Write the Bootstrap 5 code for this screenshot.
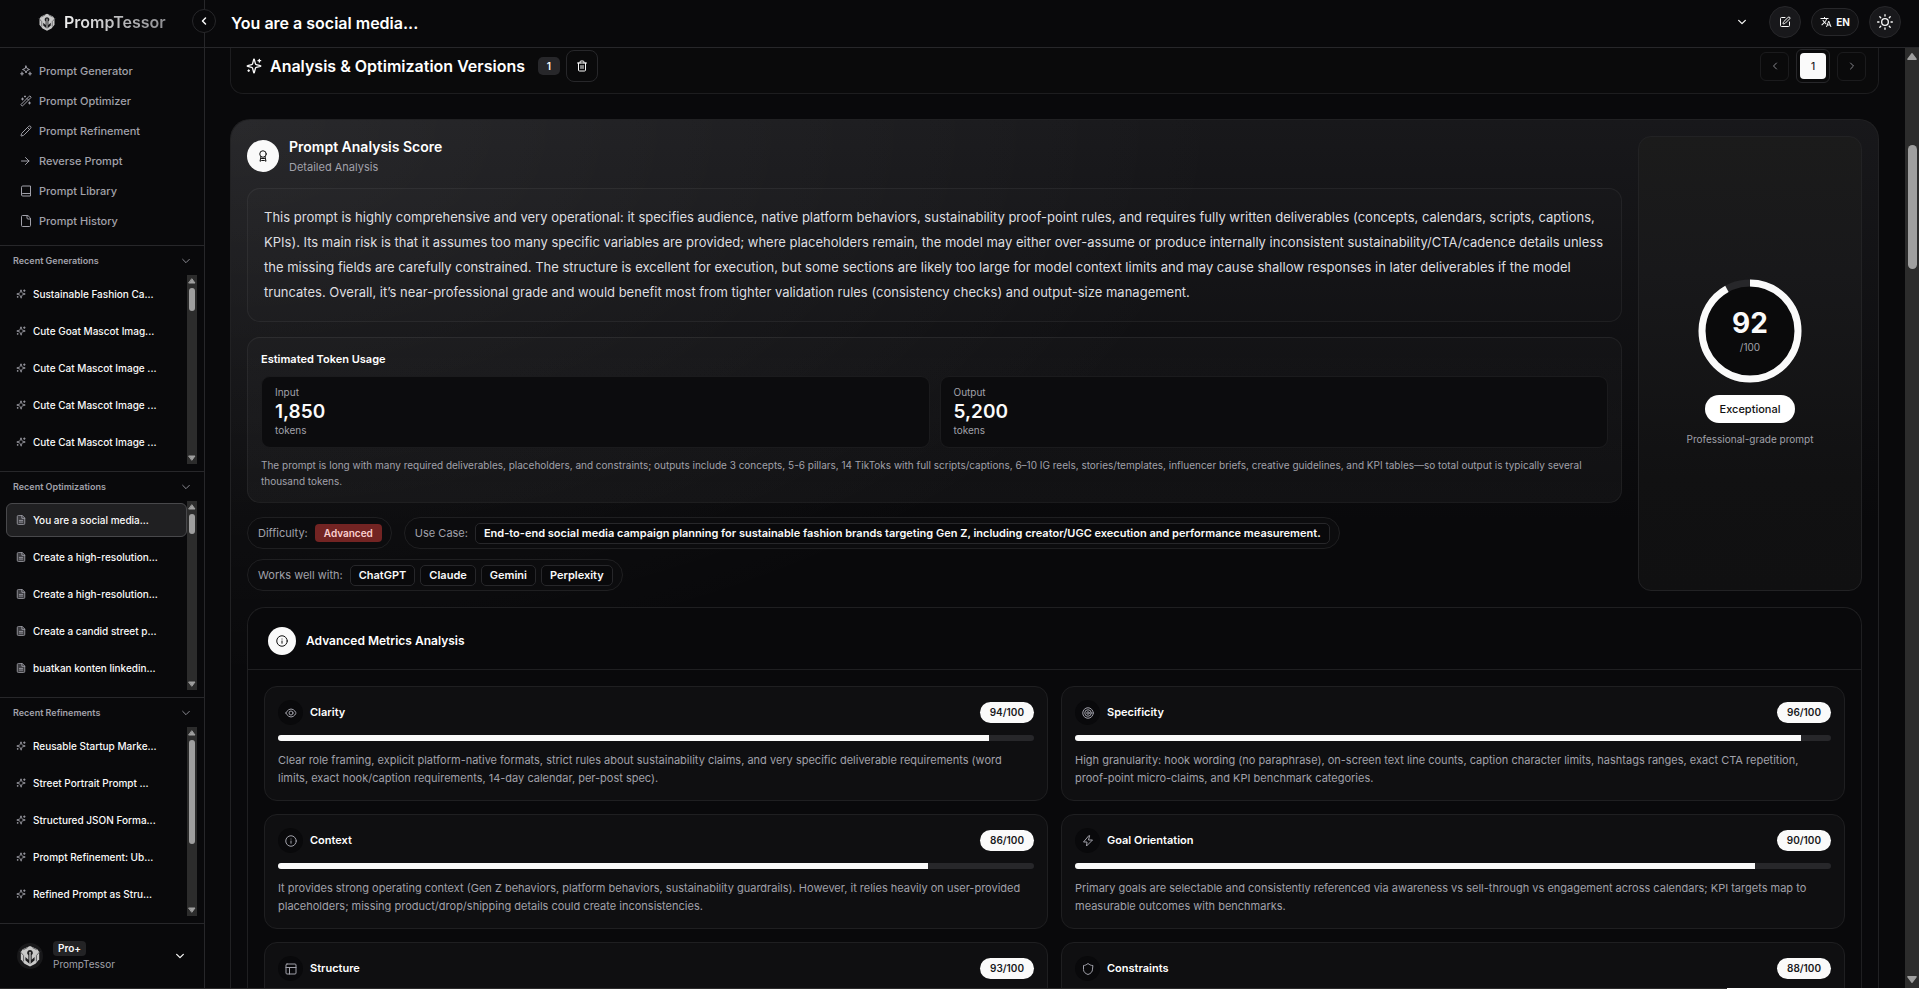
<!DOCTYPE html>
<html lang="en" data-bs-theme="dark">
<head>
<meta charset="utf-8">
<meta name="viewport" content="width=device-width, initial-scale=1">
<title>PrompTessor</title>
<link href="https://cdn.jsdelivr.net/npm/bootstrap@5.3.0/dist/css/bootstrap.min.css" rel="stylesheet">
<style>
  :root { --bg: #09090b; --line: #27272a; --soft: #1d1d1f; --muted: #a1a1aa; --ink: #fafafa; }
  body { background: var(--bg); color: var(--ink); font-family: Inter, "Liberation Sans", sans-serif; font-size: 11px; line-height: 18px; height: 100vh; overflow: hidden; }
  a { color: inherit; text-decoration: none; }
  h1, h2, h3, p { margin: 0; }
  button { color: inherit; padding: 0; background: none; border: 0; }
  svg { display: block; flex: none; fill: none; stroke: currentColor; stroke-width: 2; stroke-linecap: round; stroke-linejoin: round; }
  .i10 { width: 10px; height: 10px; } .i12 { width: 12px; height: 12px; } .i16 { width: 16px; height: 16px; }
  .bold-icon { stroke-width: 3; }
  .muted { color: var(--muted); }
  .t10 { font-size: 10px; } .semi { font-weight: 600; }
  .gap-10 { gap: 10px; }
  .fill-min { min-width: 0; min-height: 0; }
  .round { border-radius: 50%; display: flex; align-items: center; justify-content: center; flex: none; }

  .side { width: 205px; border-right: 1px solid var(--line); flex: none; }
  .topbar { height: 48px; border-bottom: 1px solid var(--line); flex: none; }
  .brand { padding-left: 38px; gap: 8px; font-size: 16px; font-weight: 600; padding-bottom: 3px; }
  .brand-name { background: linear-gradient(90deg, #f2f2f2, #8e8e92); -webkit-background-clip: text; background-clip: text; color: transparent; }
  .collapse-btn { position: absolute; left: 192px; top: 9px; width: 24px; height: 24px; background: var(--bg); border: 1px solid var(--line); z-index: 2; }
  .side-nav { padding: 8px 20px 9px; flex: none; color: var(--muted); font-weight: 500; }
  .side-nav a { gap: 7px; height: 30px; }
  .recent { border-top: 1px solid var(--line); flex: 1 1 0; min-height: 0; padding-bottom: 7px; }
  .recent-head { height: 29px; padding: 0 13px; font-size: 9px; font-weight: 600; color: var(--muted); flex: none; width: 100%; }
  .recent-list { padding: 2px 0 3px 6px; gap: 3px; min-width: 0; }
  .recent-list a { height: 34px; padding: 0 8px 0 9px; gap: 7px; font-size: 10px; font-weight: 500; border: 1px solid transparent; border-radius: 6px; }
  .recent-list a.active { background: #202022; border-color: #48484b; }
  .recent-list svg { color: var(--muted); }
  .rail { width: 10px; margin-right: 7px; background: #2c2c2c; flex: none; padding: 2px 0; color: #9f9f9f; }
  .rail svg, .page-rail svg { fill: currentColor; stroke: none; }
  .thumb { width: 6px; border-radius: 3px; background: #9f9f9f; margin-top: 3px; }
  .user { border-top: 1px solid var(--line); height: 65px; padding: 0 19px 0 17px; flex: none; }
  .avatar { width: 26px; height: 26px; background: #18181a; }
  .plan { background: #232325; border-radius: 4px; padding: 0 5px; }
  .user-name { line-height: 16px; }

  .head-main { padding: 0 18px 3px 26px; font-size: 16px; font-weight: 600; gap: 10px; }
  .head-main h1 { font-size: 16px; line-height: 20px; padding-top: 2px; }
  .circle-btn { width: 32px; height: 32px; background: #18181b; border: 1px solid var(--line); }
  .lang-btn { width: 48px; height: 28px; background: #111113; border: 1px solid var(--line); border-radius: 14px; gap: 4px; font-size: 10px; font-weight: 700; }

  .page { padding: 0 26px 0 25px; min-width: 0; overflow: hidden; }
  .page-rail { width: 14px; background: #2c2c2c; color: #9f9f9f; padding: 3px 0; flex: none; }
  .page-thumb { width: 9px; height: 124px; border-radius: 5px; background: #9f9f9f; margin-top: 83px; }
  .versions { height: 46px; border: 1px solid var(--soft); border-top: 0; border-radius: 0 0 13px 13px; padding: 0 12px 9px 15px; background: #0a0a0b; flex: none; }
  .versions h2 { font-size: 16px; line-height: 24px; font-weight: 600; }
  .count { background: #27272a; border-radius: 5px; width: 22px; line-height: 18px; text-align: center; font-size: 10px; font-weight: 600; margin: 0 6px 0 13px; }
  .pager { gap: 7px; }
  .sq { border: 1px solid var(--line); border-radius: 6px; display: flex; align-items: center; justify-content: center; }
  .sq-32 { width: 32px; height: 32px; border-radius: 8px; }
  .sq-29 { width: 29px; height: 29px; border-color: #1b1b1d; color: #85858b; }
  .sq-34 { width: 34px; height: 34px; padding: 3px; }
  .pg { width: 26px; height: 26px; border-radius: 4px; background: var(--ink); color: #18181b; font-size: 10px; line-height: 24px; font-weight: 500; }

  .analysis { margin-top: 25px; border: 1px solid #212123; border-bottom: 0; border-radius: 20px 20px 0 0; padding: 16px;
    background: radial-gradient(ellipse 1000px 560px at 0 0, rgba(255,255,255,.075), rgba(255,255,255,.035) 50%, transparent), linear-gradient(180deg, #18181b, #09090b 400px); flex: none; }
  .disc-32 { width: 32px; height: 32px; } .disc-28 { width: 28px; height: 28px; }
  .disc { background: var(--ink); color: #111; }
  .ttl { font-size: 14px; line-height: 22px; font-weight: 600; }
  .box { border: 1px solid rgba(255,255,255,.055); border-radius: 13px; background: rgba(255,255,255,.012); }
  .summary { padding: 16px; font-size: 13px; line-height: 25px; color: #dedee0; margin-top: 12px; }
  .tokens { margin-top: 15px; padding: 13px; background: linear-gradient(180deg, rgba(255,255,255,.02), rgba(255,255,255,.035)); }
  .tokens h3 { font-size: 11px; line-height: 16px; font-weight: 600; margin-bottom: 9px; }
  .tok { border: 1px solid #1b1b1d; border-radius: 9px; background: #0c0c0e; padding: 9px 13px 10px; font-size: 10px; line-height: 13px; flex: 1 1 0; }
  .tok strong { display: block; font-size: 19px; line-height: 25px; font-weight: 600; color: var(--ink); }
  .note { margin-top: 9px; font-size: 10px; line-height: 16px; }
  .pills { margin-top: 14px; gap: 10px 12px; }
  .pill { height: 32px; border: 1px solid #1f1f21; border-radius: 16px; background: #0c0c0e; padding: 0 9px 0 10px; gap: 5px; }
  .pill > .muted { margin-right: 2px; }
  .tag { height: 21px; line-height: 19px; border: 1px solid var(--line); border-radius: 5px; padding: 0 8px; background: var(--bg); font-weight: 600; }
  .level { height: 18px; line-height: 18px; border-radius: 4px; padding: 0 9px; background: #732423; color: #fbd0d0; font-size: 10px; font-weight: 600; }
  .score { width: 224px; flex: none; padding-bottom: 3px; background: linear-gradient(180deg, #1b1b1b, #18181a 30%, #111112 75%, #101011); border-color: #222224; }
  .ring { position: relative; width: 104px; height: 104px; }
  .ring svg { width: 104px; height: 104px; stroke-linecap: butt; }
  .ring-num { position: absolute; inset: 0; gap: 2px; }
  .ring-num b { font-size: 28px; line-height: 30px; }
  .ring-num span { line-height: 14px; }
  .grade { background: #fff; color: #111; border-radius: 14px; line-height: 28px; padding: 0 15px; margin: 12px 0 10px; font-weight: 500; }
  .verdict { line-height: 13px; }

  .metrics { margin-top: 16px; border: 1px solid #1f1f21; border-bottom: 0; border-radius: 18px 18px 0 0; background: var(--bg); }
  .metrics-head { height: 62px; padding: 5px 20px 0; gap: 10px; border-bottom: 1px solid #1f1f21; }
  .metrics-head h2 { font-size: 12px; line-height: 18px; font-weight: 600; }
  .metric-grid { display: grid; grid-template-columns: 1fr 1fr; gap: 13px; padding: 16px; }
  .metric { border: 1px solid #1f1f21; border-radius: 13px; background: #0f0f11; padding: 13px; }
  .metric h3 { font-size: 11px; line-height: 25px; font-weight: 600; }
  .metric-top { gap: 7px; }
  .disc-25 { width: 25px; height: 25px; background: var(--bg); color: var(--muted); }
  .out { background: var(--ink); color: #18181b; border-radius: 11px; line-height: 21px; padding: 0 10px; font-size: 10px; font-weight: 600; }
  .metric .progress { height: 6px; border-radius: 3px; background: #27272a; margin: 10px 0; }
  .metric .progress-bar { background: var(--ink); }
  .frame-line { height: 1px; flex: none; background: linear-gradient(90deg, #2b2a2b 90%, #fff 90%); }
</style>
</head>
<body class="d-flex flex-column">
<svg class="d-none" aria-hidden="true">
  <symbol id="logo" viewBox="0 0 24 24"><path d="M12 1l8 3.500 2 3v8l-4 5-6 3-6-3-4-5v-8l2-3z" fill="#c9c9c9" stroke="none"/><path d="M1.500 7.500l3.500 4v6M22.500 7.500l-3.500 4v6M5 5l4-2M19 5l-4-2" stroke="#5a5a5c" stroke-width="1"/><path d="M12 5.500a3.200 3.200 0 0 0-1.800 5.800V16L7 13v3.500l5 4.500 5-4.500V13l-3.200 3v-4.700A3.200 3.200 0 0 0 12 5.500z" fill="#1d1d1f" stroke="none"/><path d="M12 8v13" stroke="#c9c9c9" stroke-width="1.400"/></symbol>
  <symbol id="gen" viewBox="0 0 24 24"><path d="M12 2l2 5 5 2-5 2-2 5-2-5-5-2 5-2z"/><path d="M4 14l1 2.500 2.500 1L5 18.500 4 21l-1-2.500-2.500-1L3 16.500zM20 14l1 2.500 2.500 1-2.500 1L20 21l-1-2.500-2.500-1 2.500-1z" fill="currentColor" stroke-width="1"/></symbol>
  <symbol id="wand" viewBox="0 0 24 24"><path d="m21.640 3.640-1.280-1.280a1.210 1.210 0 0 0-1.720 0L2.360 18.640a1.210 1.210 0 0 0 0 1.720l1.280 1.280a1.200 1.200 0 0 0 1.720 0L21.640 5.360a1.200 1.200 0 0 0 0-1.720M14 7l3 3M5 6v4M19 14v4M10 2v2M7 8H3M21 16h-4M11 3H9"/></symbol>
  <symbol id="pencil" viewBox="0 0 24 24"><path d="M21.200 6.800a1 1 0 0 0-4-4L3.800 16.200a2 2 0 0 0-.5.800l-1.300 4.400a.5.500 0 0 0 .6.600l4.400-1.300a2 2 0 0 0 .8-.5zM15 5l4 4"/></symbol>
  <symbol id="arrow" viewBox="0 0 24 24"><path d="M3 12h15M11 5l7 7-7 7"/></symbol>
  <symbol id="book" viewBox="0 0 24 24"><path d="M3 19.500v-15A2.500 2.500 0 0 1 5.500 2H21v20H5.500a2.500 2.500 0 0 1 0-5H21"/></symbol>
  <symbol id="file" viewBox="0 0 24 24"><path d="M15 1H5a2 2 0 0 0-2 2v18a2 2 0 0 0 2 2h14a2 2 0 0 0 2-2V7zM14 1v5a2 2 0 0 0 2 2h5"/></symbol>
  <symbol id="doc" viewBox="0 0 24 24"><path d="M14 1H6a3 3 0 0 0-3 3v16a3 3 0 0 0 3 3h12a3 3 0 0 0 3-3V8z" fill="#3c3c40"/><path d="M14 1v7h7M8 13h8M8 17h8"/></symbol>
  <symbol id="sparkles" viewBox="0 0 24 24"><path d="M9.900 15.500A2 2 0 0 0 8.500 14.100l-6.100-1.600a.5.500 0 0 1 0-1L8.500 9.900A2 2 0 0 0 9.900 8.500l1.600-6.100a.5.500 0 0 1 1 0L14.100 8.500A2 2 0 0 0 15.500 9.900l6.100 1.600a.5.500 0 0 1 0 1L15.500 14.100a2 2 0 0 0-1.400 1.400l-1.600 6.100a.5.500 0 0 1-1 0z"/><path d="M20 2v4M22 4h-4M4 18v2M5 19H3"/></symbol>
  <symbol id="down" viewBox="0 0 24 24"><path d="m4 8 8 8 8-8"/></symbol>
  <symbol id="left" viewBox="0 0 24 24"><path d="m15 18-6-6 6-6"/></symbol>
  <symbol id="right" viewBox="0 0 24 24"><path d="m9 18 6-6-6-6"/></symbol>
  <symbol id="tri-up" viewBox="0 0 10 8"><path d="M5 2 8 6H2z" stroke="currentColor" stroke-width="1"/></symbol>
  <symbol id="tri-down" viewBox="0 0 10 8"><path d="M5 6 8 2H2z" stroke="currentColor" stroke-width="1"/></symbol>
  <symbol id="edit" viewBox="0 0 24 24"><path d="M12 3H5a2 2 0 0 0-2 2v14a2 2 0 0 0 2 2h14a2 2 0 0 0 2-2v-7M18.400 2.600a1 1 0 0 1 3 3l-9 9a2 2 0 0 1-.9.500l-2.900.8a.5.500 0 0 1-.6-.6l.8-2.900a2 2 0 0 1 .5-.9z"/></symbol>
  <symbol id="translate" viewBox="0 0 24 24"><path d="M12.870 15.070l-2.540-2.510.030-.030A17.500 17.500 0 0 0 14.070 6H17V4h-7V2H8v2H1v2h11.170C11.500 7.920 10.440 9.750 9 11.350 8.070 10.320 7.300 9.190 6.690 8h-2c.73 1.630 1.730 3.170 2.980 4.560l-5.090 5.020L4 19l5-5 3.110 3.110zM18.500 10h-2L12 22h2l1.120-3h4.750L21 22h2zm-2.620 7l1.620-4.330L19.120 17z" fill="currentColor" stroke="none"/></symbol>
  <symbol id="sun" viewBox="0 0 24 24"><circle cx="12" cy="12" r="5"/><path d="M12 1v2M12 21v2M4.200 4.200l1.400 1.400M18.400 18.400l1.400 1.400M1 12h2M21 12h2M4.200 19.800l1.400-1.400M18.400 5.600l1.400-1.400"/></symbol>
  <symbol id="trash" viewBox="0 0 24 24"><path d="M3 6h18M19 6v14a2 2 0 0 1-2 2H7a2 2 0 0 1-2-2V6M8 6V4a2 2 0 0 1 2-2h4a2 2 0 0 1 2 2v2M10 11v6M14 11v6"/></symbol>
  <symbol id="award" viewBox="0 0 24 24"><circle cx="12" cy="8" r="6.500"/><path d="M8 13l-2 9.500 3-1.500h6l3 1.500L16 13M9 17h6"/></symbol>
  <symbol id="info" viewBox="0 0 24 24"><circle cx="12" cy="12" r="10.500"/><path d="M12 16.500V12M12 8v.1"/></symbol>
  <symbol id="eye" viewBox="0 0 24 24"><path d="M2 12s3-8 10-8 10 8 10 8-3 8-10 8S2 12 2 12z"/><circle cx="12" cy="12" r="4"/></symbol>
  <symbol id="target" viewBox="0 0 24 24"><circle cx="12" cy="12" r="10.500"/><circle cx="12" cy="12" r="6.500"/><circle cx="12" cy="12" r="2.500"/></symbol>
  <symbol id="zap" viewBox="0 0 24 24"><path d="M13 2 3 14h7l-1 8L21 10h-8l2-8z"/></symbol>
  <symbol id="layout" viewBox="0 0 24 24"><rect x="2" y="2" width="20" height="20" rx="2"/><path d="M2 9h20M9 22V9"/></symbol>
  <symbol id="shield" viewBox="0 0 24 24"><path d="M21 13c0 5-3.500 8-9 10-5.500-2-9-5-9-10V5c3 0 6-1.500 9-4 3 2.500 6 4 9 4z"/></symbol>
</svg>

<div class="d-flex flex-grow-1 position-relative fill-min">
  <aside class="side d-flex flex-column">
    <div class="topbar brand d-flex align-items-center"><svg width="18" height="18"><use href="#logo"/></svg><span class="brand-name">PrompTessor</span></div>
    <nav class="side-nav d-flex flex-column">
      <a class="d-flex align-items-center" href="#"><svg class="i12"><use href="#gen"/></svg>Prompt Generator</a>
      <a class="d-flex align-items-center" href="#"><svg class="i12"><use href="#wand"/></svg>Prompt Optimizer</a>
      <a class="d-flex align-items-center" href="#"><svg class="i12"><use href="#pencil"/></svg>Prompt Refinement</a>
      <a class="d-flex align-items-center" href="#"><svg class="i12"><use href="#arrow"/></svg>Reverse Prompt</a>
      <a class="d-flex align-items-center" href="#"><svg class="i12"><use href="#book"/></svg>Prompt Library</a>
      <a class="d-flex align-items-center" href="#"><svg class="i12"><use href="#file"/></svg>Prompt History</a>
    </nav>

    <section class="recent d-flex flex-column">
      <button class="recent-head d-flex align-items-center justify-content-between" type="button">Recent Generations<svg class="i10"><use href="#down"/></svg></button>
      <div class="d-flex flex-grow-1 overflow-hidden">
        <div class="recent-list d-flex flex-column flex-grow-1">
          <a class="d-flex align-items-center" href="#"><svg class="i10"><use href="#sparkles"/></svg>Sustainable Fashion Ca...</a>
          <a class="d-flex align-items-center" href="#"><svg class="i10"><use href="#sparkles"/></svg>Cute Goat Mascot Imag...</a>
          <a class="d-flex align-items-center" href="#"><svg class="i10"><use href="#sparkles"/></svg>Cute Cat Mascot Image ...</a>
          <a class="d-flex align-items-center" href="#"><svg class="i10"><use href="#sparkles"/></svg>Cute Cat Mascot Image ...</a>
          <a class="d-flex align-items-center" href="#"><svg class="i10"><use href="#sparkles"/></svg>Cute Cat Mascot Image ...</a>
        </div>
        <div class="rail d-flex flex-column align-items-center"><svg width="10" height="8"><use href="#tri-up"/></svg><div class="thumb" style="height:23px"></div><svg class="mt-auto" width="10" height="8"><use href="#tri-down"/></svg></div>
      </div>
    </section>

    <section class="recent d-flex flex-column">
      <button class="recent-head d-flex align-items-center justify-content-between" type="button">Recent Optimizations<svg class="i10"><use href="#down"/></svg></button>
      <div class="d-flex flex-grow-1 overflow-hidden">
        <div class="recent-list d-flex flex-column flex-grow-1">
          <a class="active d-flex align-items-center" href="#"><svg class="i10"><use href="#doc"/></svg>You are a social media...</a>
          <a class="d-flex align-items-center" href="#"><svg class="i10"><use href="#doc"/></svg>Create a high-resolution...</a>
          <a class="d-flex align-items-center" href="#"><svg class="i10"><use href="#doc"/></svg>Create a high-resolution...</a>
          <a class="d-flex align-items-center" href="#"><svg class="i10"><use href="#doc"/></svg>Create a candid street p...</a>
          <a class="d-flex align-items-center" href="#"><svg class="i10"><use href="#doc"/></svg>buatkan konten linkedin...</a>
        </div>
        <div class="rail d-flex flex-column align-items-center"><svg width="10" height="8"><use href="#tri-up"/></svg><div class="thumb" style="height:20px"></div><svg class="mt-auto" width="10" height="8"><use href="#tri-down"/></svg></div>
      </div>
    </section>

    <section class="recent d-flex flex-column">
      <button class="recent-head d-flex align-items-center justify-content-between" type="button">Recent Refinements<svg class="i10"><use href="#down"/></svg></button>
      <div class="d-flex flex-grow-1 overflow-hidden">
        <div class="recent-list d-flex flex-column flex-grow-1">
          <a class="d-flex align-items-center" href="#"><svg class="i10"><use href="#sparkles"/></svg>Reusable Startup Marke...</a>
          <a class="d-flex align-items-center" href="#"><svg class="i10"><use href="#sparkles"/></svg>Street Portrait Prompt ...</a>
          <a class="d-flex align-items-center" href="#"><svg class="i10"><use href="#sparkles"/></svg>Structured JSON Forma...</a>
          <a class="d-flex align-items-center" href="#"><svg class="i10"><use href="#sparkles"/></svg>Prompt Refinement: Ub...</a>
          <a class="d-flex align-items-center" href="#"><svg class="i10"><use href="#sparkles"/></svg>Refined Prompt as Stru...</a>
        </div>
        <div class="rail d-flex flex-column align-items-center"><svg width="10" height="8"><use href="#tri-up"/></svg><div class="thumb" style="height:104px"></div><svg class="mt-auto" width="10" height="8"><use href="#tri-down"/></svg></div>
      </div>
    </section>

    <button class="user d-flex align-items-center text-start gap-10" type="button">
      <span class="avatar round"><svg width="22" height="22"><use href="#logo"/></svg></span>
      <span class="d-flex flex-column align-items-start t10"><span class="plan semi lh-base">Pro+</span><span class="muted user-name">PrompTessor</span></span>
      <svg class="i10 ms-auto bold-icon"><use href="#down"/></svg>
    </button>
  </aside>
  <button class="collapse-btn round" type="button" aria-label="Collapse sidebar"><svg class="i12 bold-icon"><use href="#left"/></svg></button>

  <div class="d-flex flex-column flex-grow-1 fill-min">
    <header class="topbar head-main d-flex align-items-center">
      <h1 class="fw-semibold me-auto">You are a social media...</h1>
      <button type="button" class="me-2 pe-1" aria-label="More"><svg class="i10 bold-icon"><use href="#down"/></svg></button>
      <button type="button" class="circle-btn round" aria-label="Edit"><svg class="i12"><use href="#edit"/></svg></button>
      <button type="button" class="lang-btn d-flex align-items-center justify-content-center"><svg class="i12"><use href="#translate"/></svg>EN</button>
      <button type="button" class="circle-btn round" aria-label="Theme"><svg class="i16"><use href="#sun"/></svg></button>
    </header>

    <div class="d-flex flex-grow-1 fill-min">
      <main class="page d-flex flex-column flex-grow-1">
        <section class="versions d-flex align-items-center">
          <svg class="i16"><use href="#sparkles"/></svg>
          <h2 class="ms-2">Analysis &amp; Optimization Versions</h2>
          <span class="count">1</span>
          <button type="button" class="sq sq-32" aria-label="Delete"><svg class="i12"><use href="#trash"/></svg></button>
          <div class="pager ms-auto d-flex align-items-center">
            <button type="button" class="sq sq-29" aria-label="Previous"><svg class="i12"><use href="#left"/></svg></button>
            <span class="sq sq-34"><button type="button" class="pg">1</button></span>
            <button type="button" class="sq sq-29" aria-label="Next"><svg class="i12"><use href="#right"/></svg></button>
          </div>
        </section>

        <section class="analysis">
          <div class="d-flex gap-3">
            <div class="flex-grow-1 fill-min">
              <div class="d-flex align-items-center gap-10">
                <span class="disc disc-32 round"><svg class="i12"><use href="#award"/></svg></span>
                <div><h2 class="ttl">Prompt Analysis Score</h2><p class="muted">Detailed Analysis</p></div>
              </div>
              <p class="box summary">This prompt is highly comprehensive and very operational: it specifies audience, native platform behaviors, sustainability proof-point rules, and requires fully written deliverables (concepts, calendars, scripts, captions, KPIs). Its main risk is that it assumes too many specific variables are provided; where placeholders remain, the model may either over-assume or produce internally inconsistent sustainability/CTA/cadence details unless the missing fields are carefully constrained. The structure is excellent for execution, but some sections are likely too large for model context limits and may cause shallow responses in later deliverables if the model truncates. Overall, it’s near-professional grade and would benefit most from tighter validation rules (consistency checks) and output-size management.</p>
              <div class="box tokens">
                <h3>Estimated Token Usage</h3>
                <div class="d-flex gap-10">
                  <div class="tok muted">Input<strong>1,850</strong>tokens</div>
                  <div class="tok muted">Output<strong>5,200</strong>tokens</div>
                </div>
                <p class="note muted">The prompt is long with many required deliverables, placeholders, and constraints; outputs include 3 concepts, 5-6 pillars, 14 TikToks with full scripts/captions, 6–10 IG reels, stories/templates, influencer briefs, creative guidelines, and KPI tables—so total output is typically several thousand tokens.</p>
              </div>
              <div class="pills d-flex flex-wrap">
                <div class="pill d-flex align-items-center"><span class="muted">Difficulty:</span><span class="level">Advanced</span></div>
                <div class="pill d-flex align-items-center"><span class="muted">Use Case:</span><span class="tag">End-to-end social media campaign planning for sustainable fashion brands targeting Gen Z, including creator/UGC execution and performance measurement.</span></div>
                <div class="w-100 d-flex"><div class="pill d-flex align-items-center"><span class="muted">Works well with:</span><span class="tag">ChatGPT</span><span class="tag">Claude</span><span class="tag">Gemini</span><span class="tag">Perplexity</span></div></div>
              </div>
            </div>
            <div class="box score d-flex flex-column align-items-center justify-content-center">
              <div class="ring">
                <svg viewBox="0 0 104 104"><circle cx="52" cy="52" r="48" fill="#0a0a0b" stroke="#27272a" stroke-width="7"/><circle cx="52" cy="52" r="48" stroke="#fafafa" stroke-width="7" pathLength="100" stroke-dasharray="92 8" transform="rotate(-90 52 52)"/></svg>
                <div class="ring-num d-flex flex-column align-items-center justify-content-center"><b>92</b><span class="muted t10">/100</span></div>
              </div>
              <span class="grade">Exceptional</span>
              <span class="muted t10 verdict">Professional-grade prompt</span>
            </div>
          </div>

          <div class="metrics">
            <div class="metrics-head d-flex align-items-center"><span class="disc disc-28 round"><svg class="i12"><use href="#info"/></svg></span><h2>Advanced Metrics Analysis</h2></div>
            <div class="metric-grid">
              <article class="metric">
                <div class="metric-top d-flex align-items-center"><span class="disc-25 round"><svg class="i12"><use href="#eye"/></svg></span><h3>Clarity</h3><span class="out ms-auto">94/100</span></div>
                <div class="progress"><div class="progress-bar" style="width:94%"></div></div>
                <p class="muted">Clear role framing, explicit platform-native formats, strict rules about sustainability claims, and very specific deliverable requirements (word limits, exact hook/caption requirements, 14-day calendar, per-post spec).</p>
              </article>
              <article class="metric">
                <div class="metric-top d-flex align-items-center"><span class="disc-25 round"><svg class="i12"><use href="#target"/></svg></span><h3>Specificity</h3><span class="out ms-auto">96/100</span></div>
                <div class="progress"><div class="progress-bar" style="width:96%"></div></div>
                <p class="muted">High granularity: hook wording (no paraphrase), on-screen text line counts, caption character limits, hashtags ranges, exact CTA repetition, proof-point micro-claims, and KPI benchmark categories.</p>
              </article>
              <article class="metric">
                <div class="metric-top d-flex align-items-center"><span class="disc-25 round"><svg class="i12"><use href="#info"/></svg></span><h3>Context</h3><span class="out ms-auto">86/100</span></div>
                <div class="progress"><div class="progress-bar" style="width:86%"></div></div>
                <p class="muted">It provides strong operating context (Gen Z behaviors, platform behaviors, sustainability guardrails). However, it relies heavily on user-provided placeholders; missing product/drop/shipping details could create inconsistencies.</p>
              </article>
              <article class="metric">
                <div class="metric-top d-flex align-items-center"><span class="disc-25 round"><svg class="i12"><use href="#zap"/></svg></span><h3>Goal Orientation</h3><span class="out ms-auto">90/100</span></div>
                <div class="progress"><div class="progress-bar" style="width:90%"></div></div>
                <p class="muted">Primary goals are selectable and consistently referenced via awareness vs sell-through vs engagement across calendars; KPI targets map to measurable outcomes with benchmarks.</p>
              </article>
              <article class="metric">
                <div class="metric-top d-flex align-items-center"><span class="disc-25 round"><svg class="i12"><use href="#layout"/></svg></span><h3>Structure</h3><span class="out ms-auto">93/100</span></div>
                <div class="progress"><div class="progress-bar" style="width:93%"></div></div>
              </article>
              <article class="metric">
                <div class="metric-top d-flex align-items-center"><span class="disc-25 round"><svg class="i12"><use href="#shield"/></svg></span><h3>Constraints</h3><span class="out ms-auto">88/100</span></div>
                <div class="progress"><div class="progress-bar" style="width:88%"></div></div>
              </article>
            </div>
          </div>
        </section>
      </main>
      <div class="page-rail d-flex flex-column align-items-center"><svg width="14" height="11"><use href="#tri-up"/></svg><div class="page-thumb"></div><svg class="mt-auto" width="14" height="11"><use href="#tri-down"/></svg></div>
    </div>
  </div>
</div>
<div class="frame-line"></div>
<script src="https://cdn.jsdelivr.net/npm/bootstrap@5.3.0/dist/js/bootstrap.bundle.min.js"></script>
</body>
</html>
